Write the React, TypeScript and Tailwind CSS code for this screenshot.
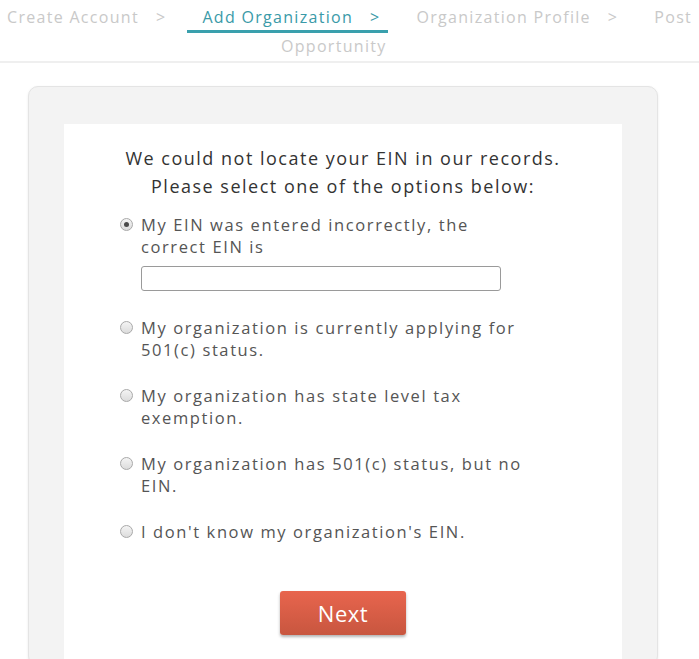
const font = { fontFamily: '"Open Sans", "DejaVu Sans", sans-serif' };

function Radio({ checked }: { checked?: boolean }) {
  return (
    <span className="mt-[4px] flex h-[13px] w-[13px] shrink-0 items-center justify-center rounded-full border border-[#a9a9a9] bg-gradient-to-b from-[#f4f4f4] to-[#dcdcdc]">
      {checked ? <span className="h-[5px] w-[5px] rounded-full bg-[#4a4a4a]" /> : null}
    </span>
  );
}

const steps = [
  { label: "Create Account", active: false },
  { label: "Add Organization", active: true },
  { label: "Organization Profile", active: false },
  { label: "Post", active: false },
];

const options = [
  "My organization is currently applying for 501(c) status.",
  "My organization has state level tax exemption.",
  "My organization has 501(c) status, but no EIN.",
  "I don't know my organization's EIN.",
];

export default function App() {
  return (
    <div className="min-h-[659px] w-full overflow-hidden bg-white" style={font}>
      <nav className="h-[63px] border-b-2 border-[#efefef] text-[16px] leading-[22px] tracking-[1.3px] text-[#c9c9c9]">
        <div className="ml-[-8px] flex gap-[13px] whitespace-nowrap pt-[6px]">
          {steps.map((s, i) => (
            <div
              key={s.label}
              className={
                "flex h-[27px] pl-[15px] pr-[8px] " +
                (s.active ? "border-b-[3px] border-[#3aa0ad] text-[#3a9aa8]" : "")
              }
            >
              <span>{s.label}</span>
              {i < 3 ? <span className="ml-[17px]">&gt;</span> : null}
            </div>
          ))}
        </div>
        <div className="pl-[281px] pt-[2px]">Opportunity</div>
      </nav>

      <div className="ml-[28px] mt-[23px] w-[630px] rounded-[10px] border border-[#e4e4e4] bg-[#f3f3f3] px-[35px] pt-[37px] shadow-[0_1px_3px_rgba(0,0,0,0.08)]">
        <div className="bg-white pb-[30px] pt-[20px]">
          <div className="text-center text-[18px] leading-[28px] tracking-[1.5px] text-[#333]">
            <p>We could not locate your EIN in our records.</p>
            <p>Please select one of the options below:</p>
          </div>

          <div className="ml-[56px] mt-[14px] w-[410px] text-[16.5px] leading-[22px] tracking-[1.6px] text-[#555]">
            <div className="flex gap-[8px]">
              <Radio checked />
              <div className="w-[389px]">
                <p>My EIN was entered incorrectly, the correct EIN is</p>
                <input
                  type="text"
                  className="mt-[8px] h-[25px] w-[360px] rounded-[3px] border border-[#9a9a9a] bg-white px-2 outline-none"
                />
              </div>
            </div>

            <div className="mt-[26px] flex flex-col gap-[24px]">
              {options.map((o) => (
                <div key={o} className="flex gap-[8px]">
                  <Radio />
                  <p className="w-[389px]">{o}</p>
                </div>
              ))}
            </div>
          </div>

          <div className="mt-[48px] flex justify-center">
            <button
              type="button"
              className="h-[44px] w-[126px] rounded-[3px] bg-gradient-to-b from-[#e8654e] to-[#c8563f] text-[22px] font-medium tracking-[0.5px] text-white shadow-[0_2px_3px_rgba(0,0,0,0.3)]"
            >
              Next
            </button>
          </div>
        </div>
      </div>
    </div>
  );
}
